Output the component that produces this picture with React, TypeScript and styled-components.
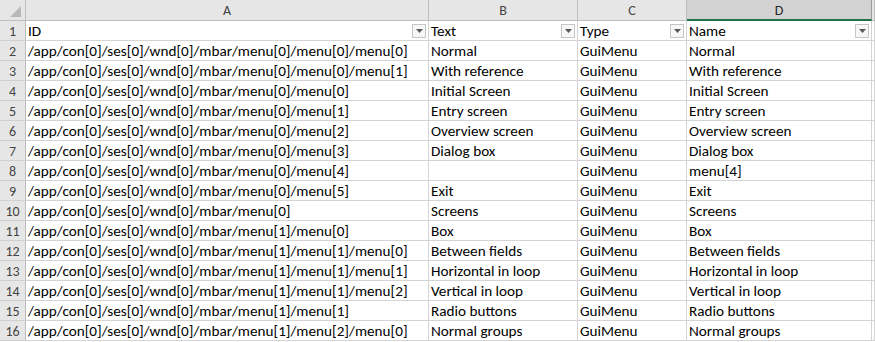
import React from 'react';
import styled, { createGlobalStyle } from 'styled-components';

const GlobalStyle = createGlobalStyle`
  html, body {
    margin: 0;
    padding: 0;
    background: #ffffff;
  }
  body {
    font-family: Calibri, Carlito, 'Liberation Sans', Arial, sans-serif;
    overflow: hidden;
  }
`;

const colors = {
  grid: '#d4d4d4',
  headerBg: '#e6e6e6',
  headerSelected: '#d2d2d2',
  headerBorder: '#bdbdbd',
  headerText: '#444444',
  text: '#000000',
  green: '#217346',
};

type Row = { id: string; text: string; type: string; name: string };

const rows: Row[] = [
  { id: '/app/con[0]/ses[0]/wnd[0]/mbar/menu[0]/menu[0]/menu[0]', text: 'Normal', type: 'GuiMenu', name: 'Normal' },
  { id: '/app/con[0]/ses[0]/wnd[0]/mbar/menu[0]/menu[0]/menu[1]', text: 'With reference', type: 'GuiMenu', name: 'With reference' },
  { id: '/app/con[0]/ses[0]/wnd[0]/mbar/menu[0]/menu[0]', text: 'Initial Screen', type: 'GuiMenu', name: 'Initial Screen' },
  { id: '/app/con[0]/ses[0]/wnd[0]/mbar/menu[0]/menu[1]', text: 'Entry screen', type: 'GuiMenu', name: 'Entry screen' },
  { id: '/app/con[0]/ses[0]/wnd[0]/mbar/menu[0]/menu[2]', text: 'Overview screen', type: 'GuiMenu', name: 'Overview screen' },
  { id: '/app/con[0]/ses[0]/wnd[0]/mbar/menu[0]/menu[3]', text: 'Dialog box', type: 'GuiMenu', name: 'Dialog box' },
  { id: '/app/con[0]/ses[0]/wnd[0]/mbar/menu[0]/menu[4]', text: '', type: 'GuiMenu', name: 'menu[4]' },
  { id: '/app/con[0]/ses[0]/wnd[0]/mbar/menu[0]/menu[5]', text: 'Exit', type: 'GuiMenu', name: 'Exit' },
  { id: '/app/con[0]/ses[0]/wnd[0]/mbar/menu[0]', text: 'Screens', type: 'GuiMenu', name: 'Screens' },
  { id: '/app/con[0]/ses[0]/wnd[0]/mbar/menu[1]/menu[0]', text: 'Box', type: 'GuiMenu', name: 'Box' },
  { id: '/app/con[0]/ses[0]/wnd[0]/mbar/menu[1]/menu[1]/menu[0]', text: 'Between fields', type: 'GuiMenu', name: 'Between fields' },
  { id: '/app/con[0]/ses[0]/wnd[0]/mbar/menu[1]/menu[1]/menu[1]', text: 'Horizontal in loop', type: 'GuiMenu', name: 'Horizontal in loop' },
  { id: '/app/con[0]/ses[0]/wnd[0]/mbar/menu[1]/menu[1]/menu[2]', text: 'Vertical in loop', type: 'GuiMenu', name: 'Vertical in loop' },
  { id: '/app/con[0]/ses[0]/wnd[0]/mbar/menu[1]/menu[1]', text: 'Radio buttons', type: 'GuiMenu', name: 'Radio buttons' },
  { id: '/app/con[0]/ses[0]/wnd[0]/mbar/menu[1]/menu[2]/menu[0]', text: 'Normal groups', type: 'GuiMenu', name: 'Normal groups' },
];

const columns = ['A', 'B', 'C', 'D'];
const headers = ['ID', 'Text', 'Type', 'Name'];
const selectedColumn = 'D';

// filter arrow on the header row
const FilterButton: React.FC = () => (
  <FilterBox>
    <svg width="7" height="4" viewBox="0 0 7 4">
      <path d="M0 0 H7 L3.5 4 Z" fill="#595959" />
    </svg>
  </FilterBox>
);

export default function App() {
  return (
    <>
      <GlobalStyle />
      <Sheet>
        <Corner>
          <CornerTriangle />
        </Corner>
        {columns.map((c) => (
          <ColumnHeader key={c} selected={c === selectedColumn}>
            {c}
          </ColumnHeader>
        ))}
        <ColumnHeader selected={false} />

        <RowNumber>1</RowNumber>
        {headers.map((h) => (
          <HeaderCell key={h}>
            <span>{h}</span>
            <FilterButton />
          </HeaderCell>
        ))}
        <Cell />

        {rows.map((r, i) => (
          <React.Fragment key={i}>
            <RowNumber>{i + 2}</RowNumber>
            <Cell>{r.id}</Cell>
            <Cell>{r.text}</Cell>
            <Cell>{r.type}</Cell>
            <Cell>{r.name}</Cell>
            <Cell />
          </React.Fragment>
        ))}
      </Sheet>
    </>
  );
}

const Sheet = styled.div`
  display: grid;
  grid-template-columns: 26px 403px 149px 109px 185px 1fr;
  grid-template-rows: 21px;
  grid-auto-rows: 20px;
  width: 875px;
  height: 342px;
  overflow: hidden;
  font-size: 15.2px;
  color: ${colors.text};
`;

const Corner = styled.div`
  position: relative;
  background: ${colors.headerBg};
  border-right: 1px solid ${colors.headerBorder};
  border-bottom: 1px solid ${colors.headerBorder};
  box-sizing: border-box;
`;

const CornerTriangle = styled.div`
  position: absolute;
  right: 4px;
  bottom: 3px;
  width: 0;
  height: 0;
  border-left: 11px solid transparent;
  border-bottom: 11px solid #b8b8b8;
`;

const ColumnHeader = styled.div<{ selected: boolean }>`
  display: flex;
  align-items: center;
  justify-content: center;
  box-sizing: border-box;
  background: ${(p) => (p.selected ? colors.headerSelected : colors.headerBg)};
  border-right: 1px solid ${(p) => (p.selected ? '#9b9b9b' : colors.headerBorder)};
  border-bottom: ${(p) => (p.selected ? `2px solid ${colors.green}` : `1px solid ${colors.headerBorder}`)};
  color: ${(p) => (p.selected ? '#262626' : colors.headerText)};
  font-size: 14px;
  padding-top: 1px;
`;

const RowNumber = styled.div`
  display: flex;
  align-items: flex-end;
  justify-content: center;
  box-sizing: border-box;
  background: ${colors.headerBg};
  border-right: 1px solid ${colors.headerBorder};
  border-bottom: 1px solid #d0d0d0;
  color: ${colors.headerText};
  font-size: 14px;
  padding-bottom: 0;
`;

const Cell = styled.div`
  display: flex;
  align-items: flex-end;
  box-sizing: border-box;
  border-right: 1px solid ${colors.grid};
  border-bottom: 1px solid ${colors.grid};
  padding: 0 0 0 2px;
  white-space: nowrap;
  overflow: hidden;
  line-height: 18px;
`;

const HeaderCell = styled(Cell)`
  justify-content: space-between;
  padding-right: 2px;
`;

const FilterBox = styled.div`
  display: flex;
  align-items: center;
  justify-content: center;
  box-sizing: border-box;
  width: 14px;
  height: 14px;
  margin-bottom: 2px;
  border: 1px solid #c6c6c6;
  background: #f7f7f7;
`;
